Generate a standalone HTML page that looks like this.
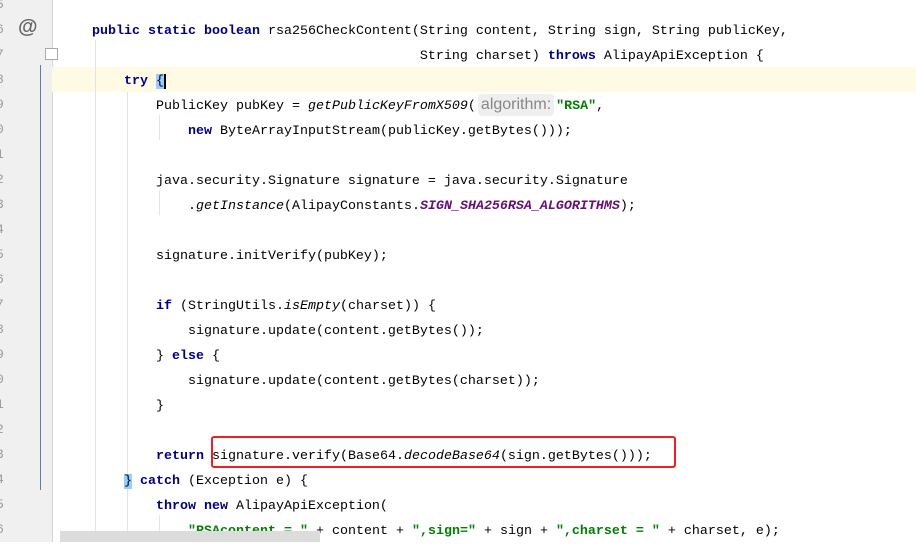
<!DOCTYPE html>
<html><head><meta charset="utf-8"><style>
body{margin:0;width:916px;height:542px;overflow:hidden;background:#fff;position:relative;font-family:"Liberation Mono","Noto Sans CJK SC",monospace;font-size:13.33px;color:#000}
.g{position:absolute;left:0;top:0;width:52px;height:542px;background:#f0f0f0;border-right:1px solid #d5d5d5}
.n{position:absolute;left:-4px;color:#999;font-size:13px}
.l{position:absolute;left:60px;white-space:pre;height:25px;line-height:25px;margin-top:2px}
.k{color:#000080;font-weight:bold}
.s{color:#008000;font-weight:bold}
.i{font-style:italic}
.c{color:#660e7a;font-weight:bold;font-style:italic}
.ig{position:absolute;width:1px;background:#e4e4e4}
</style></head><body>
<div class="g"></div>
<div style="position:absolute;left:52px;top:67px;width:864px;height:25px;background:#fffae3"></div>
<div style="position:absolute;left:40px;top:65px;width:1px;height:425px;background:#5a7fb0"></div>
<div style="position:absolute;left:18px;top:16px;font:bold 20px 'Liberation Sans',sans-serif;color:#666">@</div>
<div style="position:absolute;left:45px;top:48px;width:11px;height:10px;border:1px solid #aaa;background:#fff"></div>
<div class="ig" style="left:95px;top:40px;height:502px"></div>
<div class="ig" style="left:127px;top:92px;height:450px"></div>
<div class="ig" style="left:159px;top:115px;height:25px"></div>
<div class="ig" style="left:159px;top:190px;height:25px"></div>
<div class="ig" style="left:159px;top:515px;height:27px"></div>
<div class="n" style="top:-3px">5</div><div class="n" style="top:22px">6</div><div class="n" style="top:47px">7</div><div class="n" style="top:72px">8</div><div class="n" style="top:97px">9</div><div class="n" style="top:122px">0</div><div class="n" style="top:147px">1</div><div class="n" style="top:172px">2</div><div class="n" style="top:197px">3</div><div class="n" style="top:222px">4</div><div class="n" style="top:247px">5</div><div class="n" style="top:272px">6</div><div class="n" style="top:297px">7</div><div class="n" style="top:322px">8</div><div class="n" style="top:347px">9</div><div class="n" style="top:372px">0</div><div class="n" style="top:397px">1</div><div class="n" style="top:422px">2</div><div class="n" style="top:447px">3</div><div class="n" style="top:472px">4</div><div class="n" style="top:497px">5</div><div class="n" style="top:522px">6</div>
<div class="l" style="top:17px">    <span class="k">public static boolean</span> rsa256CheckContent(String content, String sign, String publicKey,</div>
<div class="l" style="top:42px">                                             String charset) <span class="k">throws</span> AlipayApiException {</div>
<div class="l" style="top:67px">        <span class="k">try</span> <span style="background:#99ccff;border-right:2px solid #000">{</span></div>
<div class="l" style="top:92px">            PublicKey pubKey = <span class="i">getPublicKeyFromX509</span>(<span style="display:inline-block;background:#efefef;color:#888;font:16px 'Liberation Sans',sans-serif;border-radius:4px;padding:0 3px;line-height:22px;margin:0 2px">algorithm:</span><span class="s">"RSA"</span>,</div>
<div class="l" style="top:117px">                <span class="k">new</span> ByteArrayInputStream(publicKey.getBytes()));</div>
<div class="l" style="top:167px">            java.security.Signature signature = java.security.Signature</div>
<div class="l" style="top:192px">                .<span class="i">getInstance</span>(AlipayConstants.<span class="c">SIGN_SHA256RSA_ALGORITHMS</span>);</div>
<div class="l" style="top:242px">            signature.initVerify(pubKey);</div>
<div class="l" style="top:292px">            <span class="k">if</span> (StringUtils.<span class="i">isEmpty</span>(charset)) {</div>
<div class="l" style="top:317px">                signature.update(content.getBytes());</div>
<div class="l" style="top:342px">            } <span class="k">else</span> {</div>
<div class="l" style="top:367px">                signature.update(content.getBytes(charset));</div>
<div class="l" style="top:392px">            }</div>
<div class="l" style="top:442px">            <span class="k">return</span> signature.verify(Base64.<span class="i">decodeBase64</span>(sign.getBytes()));</div>
<div class="l" style="top:467px">        <span style="background:#99ccff">}</span> <span class="k">catch</span> (Exception e) {</div>
<div class="l" style="top:492px">            <span class="k">throw new</span> AlipayApiException(</div>
<div class="l" style="top:517px">                <span class="s">"RSAcontent = "</span> + content + <span class="s">",sign="</span> + sign + <span class="s">",charset = "</span> + charset, e);</div>
<div style="position:absolute;left:211px;top:436px;width:461px;height:28px;border:2px solid #f01e1e;border-radius:3px"></div>
<div style="position:absolute;left:60px;top:531px;width:260px;height:11px;background:#dcdcdc"></div>
</body></html>
